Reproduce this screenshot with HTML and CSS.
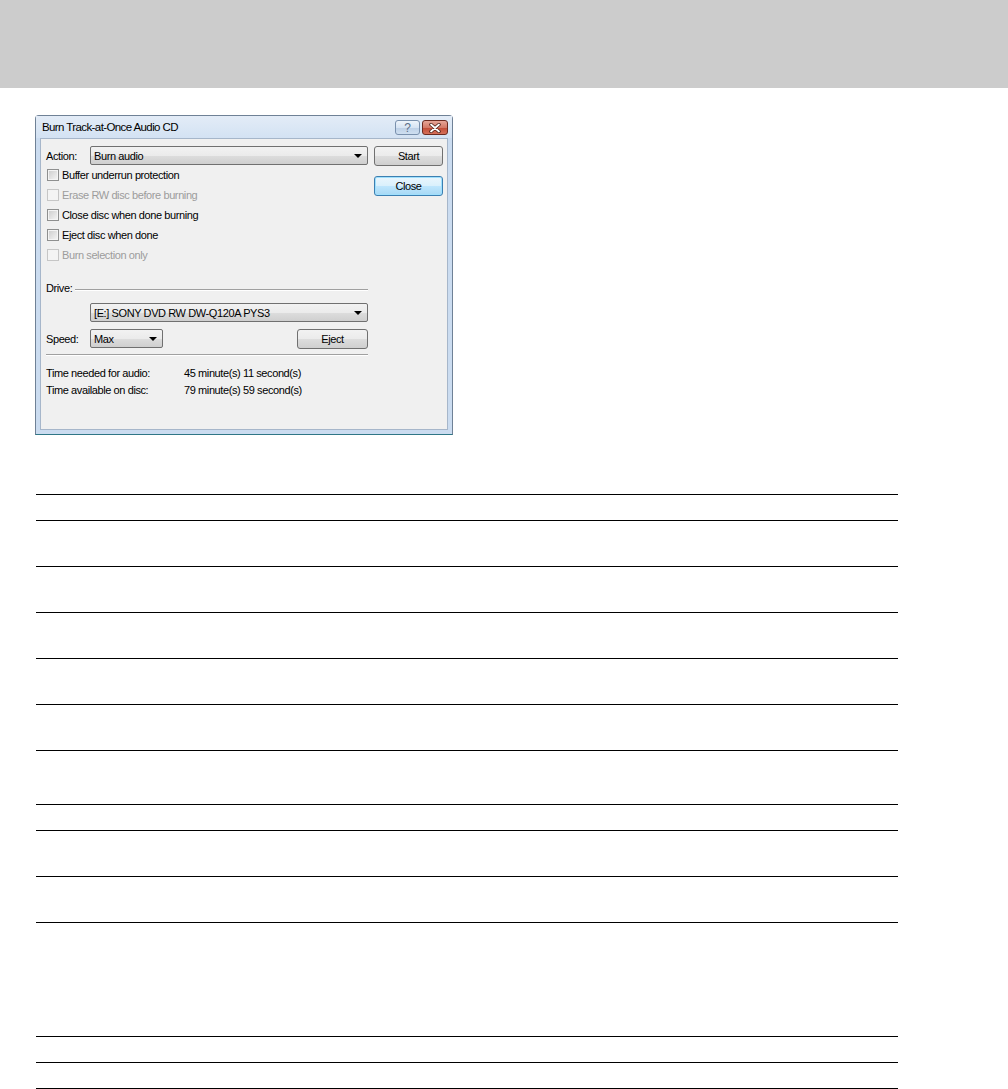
FILE: index.html
```html
<!DOCTYPE html>
<html lang="en">
<head>
    <meta charset="UTF-8" />
    <title>Burn Track-at-Once Audio CD</title>
    <link rel="stylesheet" href="styles.css">
</head>
<body>
    <div class="topbar"></div>

    <main class="page">
        <!-- Dialog screenshot -->
        <div class="dialog">
            <div class="titlebar">
                <span class="title">Burn Track-at-Once Audio CD</span>
                <div class="caption-buttons">
                    <span class="cap-btn help">?</span>
                    <span class="cap-btn close">
                        <svg width="14" height="10" viewBox="0 0 14 10">
                            <path d="M3 1.5 L11 8.5 M11 1.5 L3 8.5" stroke="#4a1d16" stroke-width="3.4" stroke-linecap="round"/>
                            <path d="M3 1.5 L11 8.5 M11 1.5 L3 8.5" stroke="#ffffff" stroke-width="1.8" stroke-linecap="round"/>
                        </svg>
                    </span>
                </div>
            </div>

            <div class="client">
                <div class="form">
                    <div class="action-row">
                        <span class="lbl">Action:</span>
                        <div class="combo action-combo"><span>Burn audio</span><i class="arrow"></i></div>
                    </div>

                    <ul class="checks">
                        <li class="check"><span class="box"></span>Buffer underrun protection</li>
                        <li class="check disabled"><span class="box"></span>Erase RW disc before burning</li>
                        <li class="check"><span class="box"></span>Close disc when done burning</li>
                        <li class="check"><span class="box"></span>Eject disc when done</li>
                        <li class="check disabled"><span class="box"></span>Burn selection only</li>
                    </ul>

                    <div class="group-head">
                        <span>Drive:</span>
                        <span class="etch"></span>
                    </div>
                    <div class="combo drive-combo"><span>[E:] SONY DVD RW DW-Q120A PYS3</span><i class="arrow"></i></div>

                    <div class="speed-row">
                        <span class="lbl">Speed:</span>
                        <div class="combo speed-combo"><span>Max</span><i class="arrow"></i></div>
                        <button class="btn eject">Eject</button>
                    </div>

                    <div class="etch separator"></div>

                    <div class="times">
                        <span>Time needed for audio:</span><span>45 minute(s) 11 second(s)</span>
                        <span>Time available on disc:</span><span>79 minute(s) 59 second(s)</span>
                    </div>
                </div>

                <div class="side-buttons">
                    <button class="btn">Start</button>
                    <button class="btn default">Close</button>
                </div>
            </div>
        </div>

        <!-- Empty ruled table -->
        <div class="rules">
            <div class="rule-row" style="height: 26px"></div>
            <div class="rule-row" style="height: 46px"></div>
            <div class="rule-row" style="height: 46px"></div>
            <div class="rule-row" style="height: 46px"></div>
            <div class="rule-row" style="height: 46px"></div>
            <div class="rule-row" style="height: 46px"></div>
            <div class="rule-row" style="height: 54px"></div>
            <div class="rule-row" style="height: 26px"></div>
            <div class="rule-row" style="height: 46px"></div>
            <div class="rule-row" style="height: 46px"></div>
            <div class="rule-row" style="height: 114px"></div>
            <div class="rule-row" style="height: 26px"></div>
            <div class="rule-row" style="height: 26px"></div>
        </div>
    </main>
</body>
</html>
```

FILE: styles.css
```css
/* Page */
body {
    margin: 0;
    padding: 0;
    background-color: #ffffff;
    font-family: 'Liberation Sans', Arial, sans-serif;
    overflow: hidden;
}

.topbar {
    height: 88px;
    background-color: #cccccc;
}

.page {
    padding: 27px 0 0 35px;
}

/* Dialog frame */
.dialog {
    width: 418px;
    height: 320px;
    box-sizing: border-box;
    border: 1px solid #6f8196;
    border-bottom-color: #2f7686;
    border-radius: 4px 4px 0 0;
    background: #cbdcf0;
    padding: 0 4px 4px 4px;
    display: flex;
    flex-direction: column;
}

.titlebar {
    height: 22px;
    display: flex;
    align-items: center;
    justify-content: space-between;
    background: linear-gradient(#e3ecf7, #d3e2f3);
    margin: 0 -4px;
    padding: 0 4px 0 6px;
}

.title {
    font-size: 11.5px;
    letter-spacing: -0.6px;
    color: #000000;
}

.caption-buttons {
    display: flex;
    gap: 2px;
    padding-top: 1px;
}

.cap-btn {
    height: 15px;
    box-sizing: border-box;
    display: flex;
    align-items: center;
    justify-content: center;
    border-radius: 3px;
}

.cap-btn.help {
    width: 25px;
    border: 1px solid #7990ad;
    background: linear-gradient(#eef4fb 0%, #d7e4f3 50%, #bccfe6 51%, #cfdff1 100%);
    color: #5b6f88;
    font-size: 12px;
}

.cap-btn.close {
    width: 26px;
    border: 1px solid #6b2a20;
    background: linear-gradient(#e6a597 0%, #d47a68 50%, #c04a35 51%, #d5705a 100%);
}

/* Dialog body */
.client {
    flex: 1;
    display: flex;
    gap: 6px;
    background-color: #f0f0f0;
    border: 1px solid #a6b6ca;
    padding: 7px 4px 0 5px;
    font-size: 11px;
    letter-spacing: -0.4px;
    color: #000000;
}

.form {
    width: 322px;
}

.lbl {
    width: 44px;
    flex-shrink: 0;
}

.action-row {
    display: flex;
    align-items: center;
    height: 19px;
}

.combo {
    height: 19px;
    box-sizing: border-box;
    border: 1px solid #707070;
    border-radius: 2px;
    background: linear-gradient(#f2f2f2 0%, #ebebeb 50%, #dddddd 51%, #cfcfcf 100%);
    display: flex;
    align-items: center;
    justify-content: space-between;
    padding: 0 5px 0 3px;
}

.action-combo {
    width: 278px;
}

.arrow {
    width: 0;
    height: 0;
    border-left: 4px solid transparent;
    border-right: 4px solid transparent;
    border-top: 4px solid #000000;
}

/* Checkboxes */
.checks {
    list-style: none;
    margin: 0;
    padding: 0;
}

.check {
    height: 20px;
    display: flex;
    align-items: center;
    gap: 3px;
}

.check .box {
    width: 10px;
    height: 10px;
    margin-left: 1px;
    border: 1px solid #8e8f8f;
    background: linear-gradient(135deg, #cbcbcb, #f6f6f6);
    box-shadow: inset 0 0 0 1px #f4f4f4;
}

.check.disabled {
    color: #9c9c9c;
}

.check.disabled .box {
    border-color: #c6c6c6;
    background: #f4f4f4;
}

/* Drive group */
.group-head {
    display: flex;
    align-items: center;
    gap: 3px;
    height: 14px;
    margin-top: 16px;
}

.etch {
    flex: 1;
    border-top: 1px solid #a0a0a0;
    border-bottom: 1px solid #ffffff;
    margin-top: 3px;
}

.drive-combo {
    width: 278px;
    margin: 8px 0 0 44px;
}

.speed-row {
    display: flex;
    align-items: center;
    margin-top: 7px;
    height: 19px;
}

.speed-combo {
    width: 73px;
}

.btn {
    height: 20px;
    box-sizing: border-box;
    border: 1px solid #707070;
    border-radius: 3px;
    background: linear-gradient(#f2f2f2 0%, #ebebeb 50%, #dddddd 51%, #cfcfcf 100%);
    font-family: inherit;
    font-size: 11px;
    letter-spacing: -0.4px;
    color: #000000;
    padding: 0;
}

.eject {
    width: 71px;
    margin-left: auto;
}

.separator {
    flex: none;
    margin-top: 6px;
}

.times {
    display: grid;
    grid-template-columns: 138px auto;
    grid-auto-rows: 17px;
    align-items: center;
    margin-top: 8px;
}

/* Right buttons */
.side-buttons {
    display: flex;
    flex-direction: column;
    gap: 10px;
    width: 69px;
}

.btn.default {
    border-color: #3c7fb1;
    background: linear-gradient(#eaf6fd 0%, #d9f0fc 50%, #bee6fd 51%, #a7d9f5 100%);
    box-shadow: inset 0 0 0 1px #9fe0fd;
}

/* Ruled table */
.rules {
    width: 862px;
    margin: 59px 0 0 1px;
    border-top: 1px solid #000000;
}

.rule-row {
    box-sizing: border-box;
    border-bottom: 1px solid #000000;
}
```
